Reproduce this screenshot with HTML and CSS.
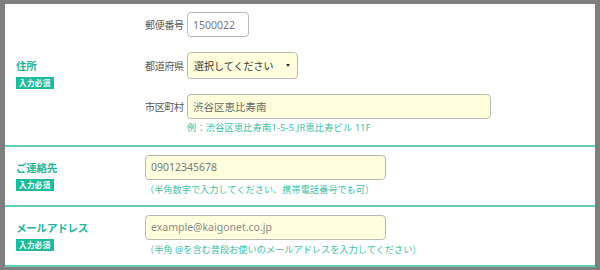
FILE: index.html
```
<!DOCTYPE html>
<html lang="ja">
<head>
  <meta charset="UTF-8" />
  <meta name="viewport" content="width=device-width, initial-scale=1" />
  <title>お問い合わせフォーム</title>
  <link rel="stylesheet" href="styles.css">
</head>
<body>

  <div class="form">

    <div class="row row-address">
      <div class="head">
        <span class="label">住所</span>
        <span class="required">入力必須</span>
      </div>
      <div class="body">
        <div class="sub">
          <span class="sublabel">郵便番号</span>
          <input class="field zip" type="text" value="1500022" aria-label="郵便番号">
        </div>
        <div class="sub">
          <span class="sublabel">都道府県</span>
          <div class="select-wrap">
            <select class="field pref" aria-label="都道府県">
              <option>選択してください</option>
              <option>東京都</option>
            </select>
          </div>
        </div>
        <div class="sub">
          <span class="sublabel">市区町村</span>
          <input class="field city" type="text" value="渋谷区恵比寿南" aria-label="市区町村">
        </div>
        <p class="hint hint-city">例：渋谷区恵比寿南1-5-5 JR恵比寿ビル 11F</p>
      </div>
    </div>

    <div class="row">
      <div class="head">
        <span class="label">ご連絡先</span>
        <span class="required">入力必須</span>
      </div>
      <div class="body">
        <input class="field wide" type="text" value="09012345678" aria-label="ご連絡先">
        <p class="hint">（半角数字で入力してください、携帯電話番号でも可）</p>
      </div>
    </div>

    <div class="row">
      <div class="head">
        <span class="label">メールアドレス</span>
        <span class="required">入力必須</span>
      </div>
      <div class="body">
        <input class="field wide" type="text" placeholder="example@kaigonet.co.jp" aria-label="メールアドレス">
        <p class="hint">（半角 @を含む普段お使いのメールアドレスを入力してください）</p>
      </div>
    </div>

  </div>

</body>
</html>
```

FILE: styles.css
```
html, body {
  margin: 0;
  height: 270px;
  overflow: hidden;
}
body {
  background: #7f7f7f;
  font-family: "Noto Sans", "Noto Sans CJK JP", sans-serif;
  color: #555;
  padding: 4px 5px 0 5px;
  box-sizing: border-box;
}
.form {
  background: #fff;
}
.row {
  display: flex;
  min-height: 60px;
  border-bottom: 2px solid #5ccfb8;
  box-sizing: border-box;
}
.row-address {
  min-height: 143px;
}
.head {
  width: 140px;
  padding-left: 11px;
  box-sizing: border-box;
  display: flex;
  flex-direction: column;
  justify-content: center;
  align-items: flex-start;
}
.label {
  color: #1fb596;
  font-weight: bold;
  font-size: 10.5px;
  line-height: 13px;
  letter-spacing: -0.2px;
}
.required {
  margin-top: 4px;
  background: #1fbc9c;
  color: #fff;
  font-size: 7.5px;
  font-weight: bold;
  line-height: 12px;
  padding: 0 3px;
  letter-spacing: 0.4px;
}
.body {
  flex: 1;
  padding-top: 7px;
}
.row-address .body {
  padding-top: 8px;
}
.sub {
  display: flex;
  align-items: center;
  margin-bottom: 15px;
}
.sub:nth-child(3) {
  margin-bottom: 0;
}
.sublabel {
  width: 42px;
  font-size: 10px;
  letter-spacing: -0.3px;
  color: #555;
  white-space: nowrap;
}
.field {
  font-family: "Noto Sans", "Noto Sans CJK JP", sans-serif;
  font-size: 10.5px;
  color: #777;
  height: 25px;
  padding: 0 5px;
  border: 1px solid #b9b9b0;
  border-radius: 4px;
  background: #ffffdd;
  box-sizing: border-box;
  outline: none;
}
.field::placeholder {
  color: #8a8a8a;
}
.zip {
  width: 62px;
  background: #fff;
}
.select-wrap {
  position: relative;
}
.select-wrap::after {
  content: "";
  position: absolute;
  right: 8px;
  top: 12px;
  border-left: 2px solid transparent;
  border-right: 2px solid transparent;
  border-top: 3px solid #333;
}
.pref {
  width: 111px;
  height: 27px;
  padding-left: 6px;
  color: #333;
  font-size: 10px;
  -webkit-appearance: none;
  appearance: none;
}
.city {
  width: 304px;
  color: #666;
}
.wide {
  width: 241px;
}
.hint {
  margin: 4px 0 0;
  font-size: 9.2px;
  line-height: 12px;
  color: #3cbfa3;
}
.hint-city {
  margin: 3px 0 0 42px;
  letter-spacing: 0.2px;
}
```
